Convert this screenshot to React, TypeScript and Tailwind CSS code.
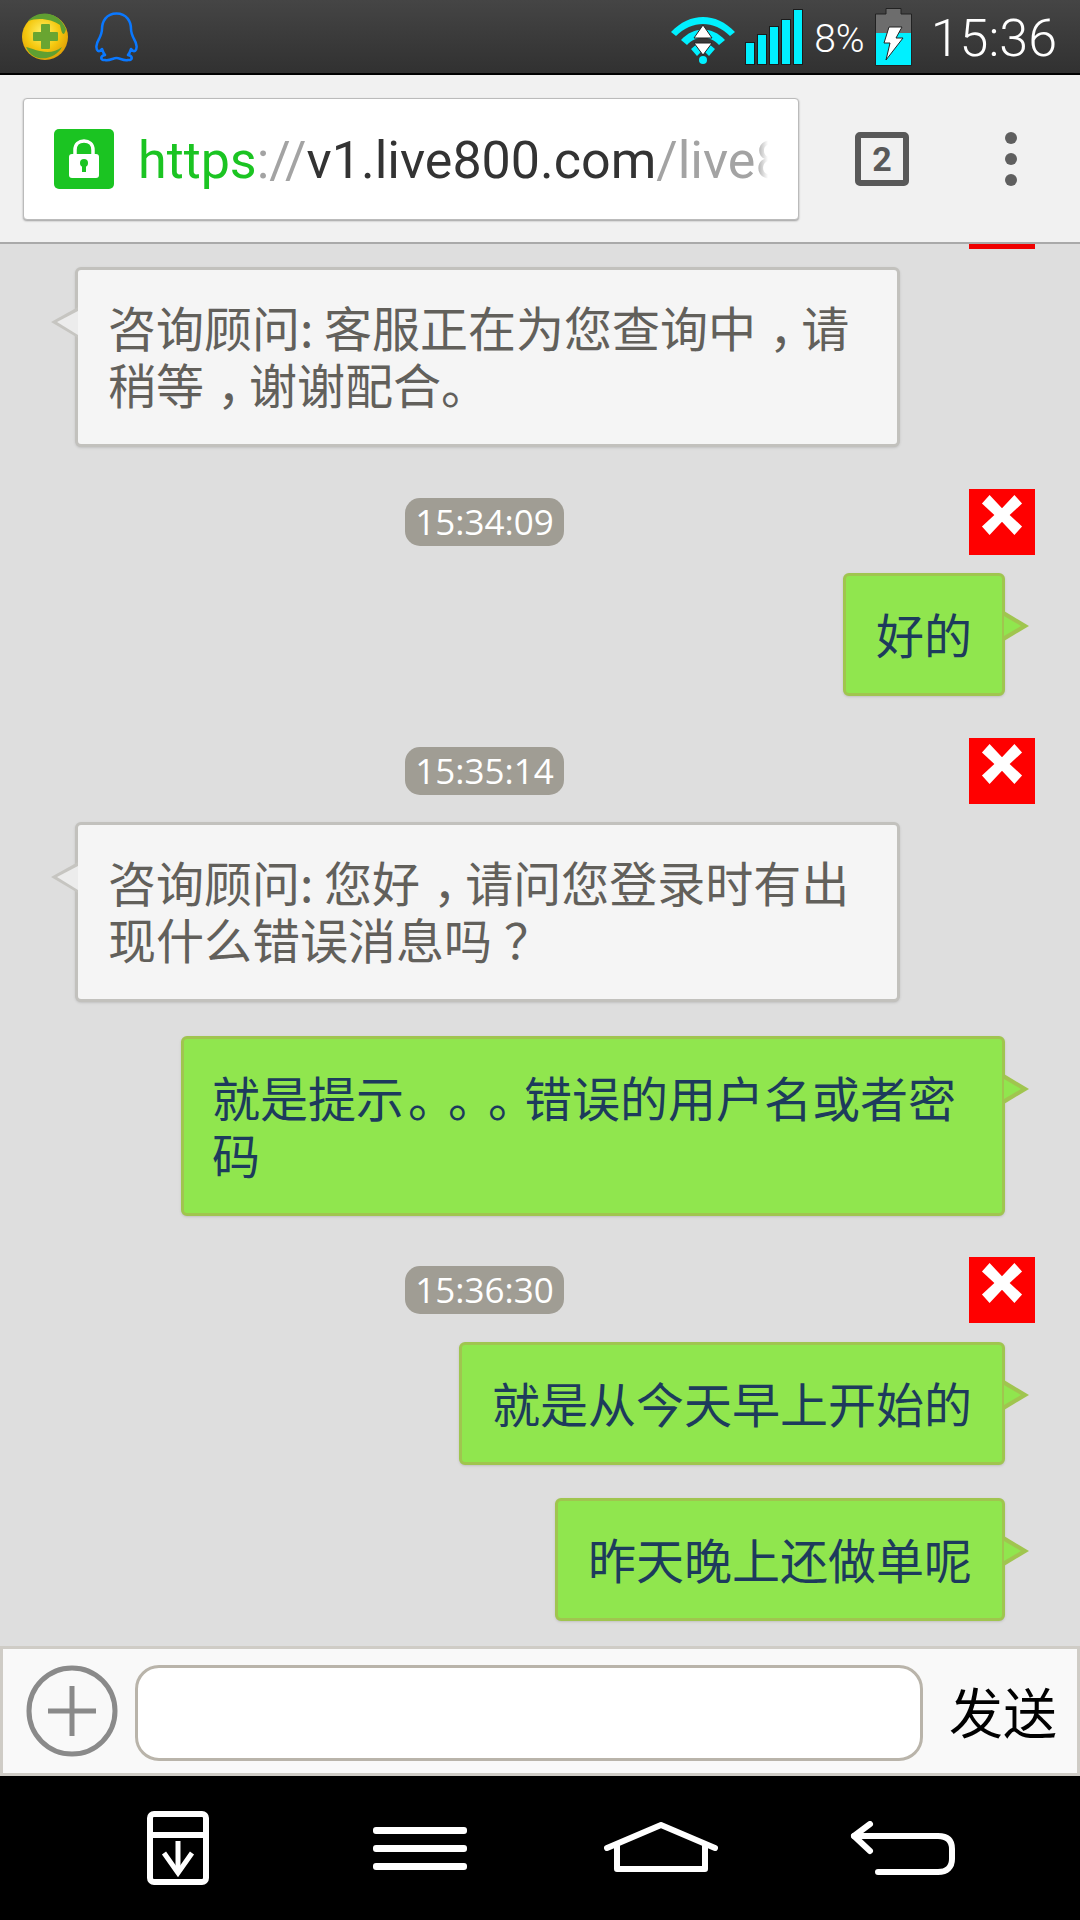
import React from "react";

const cjk = "font-['Noto_Sans_CJK_SC','Noto_Sans',sans-serif] [text-spacing-trim:space-all]";

function Close() {
  return (
    <div className="w-[66px] h-[66px] bg-[#ff0000] flex items-center justify-center shrink-0">
      <svg className="mb-[14px]" width="42" height="42" viewBox="0 0 44 44">
        <path d="M9 1 L22 15 L35 1 L43 10 L30 22 L43 34 L35 43 L22 29 L9 43 L1 34 L14 22 L1 10 Z" fill="#fff" />
      </svg>
    </div>
  );
}

function TimeRow({ t }: { t: string }) {
  return (
    <div className="flex items-center h-[66px] pl-[405px] pr-[45px]">
      <div className="w-[159px] h-[48px] rounded-[15px] bg-[#a09d94] text-white text-[35px] leading-[48px] text-center font-['Open_Sans',sans-serif]">{t}</div>
      <div className="ml-auto"><Close /></div>
    </div>
  );
}

function Comma() {
  return <span className="relative left-[13px] mr-[-3px]">，</span>;
}

function Left({ children }: { children: React.ReactNode }) {
  return (
    <div className="relative ml-[75px] w-[825px] rounded-[6px] border-[3px] border-[#c2c1bd] bg-[#f5f5f5] pl-[30px] pr-[20px] pt-[28px] pb-[32px] text-[#62605b] shadow-sm">
      <svg className="absolute top-[37px] left-[-28px]" width="28" height="32" viewBox="0 0 28 32">
        <path d="M28 0 L1 15 L28 31 Z" fill="#c6c5c1" />
        <path d="M28 4 L7 15 L28 28 Z" fill="#ececec" />
      </svg>
      <div className={`text-[48px] leading-[57px] whitespace-nowrap ${cjk}`}>{children}</div>
    </div>
  );
}

function Right({ children, wide }: { children: React.ReactNode; wide?: boolean }) {
  return (
    <div className={`relative self-end mr-[75px] rounded-[6px] border-[3px] border-[#a0c54f] bg-[#90e64e] pr-[30px] pt-[29px] pb-[31px] text-[#1d3b5c] shadow-sm ${wide ? "w-[824px] pl-[28px]" : "pl-[30px]"}`}>
      <svg className="absolute left-[100%] top-[34px] ml-[2px]" width="26" height="32" viewBox="0 0 26 32">
        <path d="M0 1 L25 16 L0 31 Z" fill="#a0c54f" />
        <path d="M0 6 L17 16 L0 26 Z" fill="#90e64e" />
      </svg>
      <div className={`text-[48px] leading-[57px] whitespace-nowrap ${cjk}`}>{children}</div>
    </div>
  );
}

export default function App() {
  return (
    <div className="w-[1080px] h-[1920px] flex flex-col bg-[#dedede] overflow-hidden">
      {/* status bar */}
      <div className="h-[75px] shrink-0 flex items-center pl-[22px] pr-[23px] border-b-[2px] border-black bg-gradient-to-b from-[#454545] to-[#313131]">
        <svg width="46" height="48" viewBox="0 0 46 48">
          <defs>
            <radialGradient id="y" cx="45%" cy="40%" r="60%">
              <stop offset="0" stopColor="#fff36a" />
              <stop offset="0.6" stopColor="#f5c80f" />
              <stop offset="1" stopColor="#e0a207" />
            </radialGradient>
          </defs>
          <circle cx="23" cy="24" r="23" fill="url(#y)" />
          <path d="M6 8 C16 -3 36 -3 44 16 C42 24 40 22 38 12 C30 6 16 4 6 8Z" fill="#5f9f32" />
          <path d="M4 34 C12 36 28 44 40 34 C34 46 12 52 4 34Z" fill="#5f9f32" />
          <path d="M20 12 h7 v8 h8 v7 h-8 v8 h-7 v-8 h-8 v-7 h8z" fill="#69a531" stroke="#69a531" strokeWidth="2" strokeLinejoin="round" />
        </svg>
        <svg className="ml-[27px]" width="43" height="50" viewBox="0 0 43 50" fill="none" stroke="#0a78ff" strokeWidth="2.5" strokeLinejoin="round">
          <path d="M21.5 1.5 C11 1.5 7 10 7 17 C7 21 6 23 4 27 C1 32 0.5 37 3 39 C5 40 6 38 7 37 C8 40 9 42 10 43 C5 44 5 48 10 48 C15 49 18 46 21.5 46 C25 46 28 49 33 48 C38 48 38 44 33 43 C34 42 35 40 36 37 C37 38 38 40 40 39 C42.5 37 42 32 39 27 C37 23 36 21 36 17 C36 10 32 1.5 21.5 1.5 Z" />
        </svg>
        <svg className="ml-auto mt-[6px]" width="66" height="48" viewBox="0 0 66 48">
          <path d="M1 16 C20 -4 46 -4 65 16 L60 20 C44 4 22 4 6 20Z" fill="#00f0ff" />
          <path d="M11 24 C24 10 42 10 55 24 L49 29 C40 19 26 19 17 29Z" fill="#00f0ff" />
          <path d="M21 33 L27 28 L31 36 L27 40Z M45 33 L39 28 L35 36 L39 40Z" fill="#00f0ff" />
          <circle cx="33" cy="44" r="4" fill="#00f0ff" />
          <path d="M33 9 L42 22 H24Z M24 27 H42 L33 39Z" fill="#fff" stroke="#222" strokeWidth="1" />
        </svg>
        <div className="ml-[9px] h-[57px] flex items-end gap-[2px]">
          {[23, 31, 39, 46, 56].map((h) => (
            <div key={h} className="w-[10px] bg-[#00f0ff] border border-[#1b1b1b]" style={{ height: h }} />
          ))}
        </div>
        <div className="ml-[11px] mt-[5px] text-white text-[39px] leading-none font-['Roboto',sans-serif] font-light">8%</div>
        <svg className="ml-[10px]" width="37" height="58" viewBox="0 0 37 58">
          <path d="M11 .5 H26 V6 H36.5 V57.5 H.5 V6 H11Z" fill="#6d6d6d" stroke="#222" />
          <rect x="1" y="25" width="35" height="32" fill="#00f0ff" />
          <path d="M14 19 H27 L21 30 H28 L11 52 L15 35 H9Z" fill="#fff" stroke="#222" strokeWidth="1" />
        </svg>
        <div className="ml-[19px] mt-[4px] text-white text-[52px] leading-none font-['Roboto',sans-serif] font-light">15:36</div>
      </div>

      {/* browser bar */}
      <div className="h-[169px] shrink-0 flex items-start pl-[23px] pt-[23px] bg-[#f1f1f1] border-b-[2px] border-[#a9a9a9]">
        <div className="w-[776px] h-[122px] bg-white rounded-[4px] border border-[#bbb] shadow-[0_1px_2px_rgba(0,0,0,0.35)] flex items-center pl-[30px] pr-[30px] overflow-hidden">
          <div className="w-[60px] h-[60px] rounded-[5px] bg-[#1bc422] flex items-center justify-center shrink-0">
            <svg width="32" height="40" viewBox="0 0 32 40">
              <path d="M7 16 V11 C7 5 11 2 16 2 C21 2 25 5 25 11 V16" fill="none" stroke="#fff" strokeWidth="3.5" />
              <rect x="1" y="15" width="30" height="24" rx="3" fill="#fff" />
              <circle cx="16" cy="24" r="4" fill="#1bc422" />
              <rect x="14" y="25" width="4" height="8" fill="#1bc422" />
            </svg>
          </div>
          <div className="relative ml-[24px] mt-[4px] w-[630px] overflow-hidden whitespace-nowrap text-[52px] leading-[64px] font-['Roboto',sans-serif] font-normal text-[#333]">
            <span className="text-[#1bc422]">https</span><span className="text-[#a3a3a3]">://</span>v1.live800.com<span className="text-[#a3a3a3]">/live800/chat</span>
            <div className="absolute right-0 top-0 h-full w-[12px] bg-gradient-to-r from-transparent to-white" />
          </div>
        </div>
        <div className="ml-[56px] mt-[34px] w-[54px] h-[54px] rounded-[5px] border-[6px] border-[#595959] flex items-center justify-center text-[#595959] text-[34px] leading-none font-bold font-['Roboto',sans-serif]">2</div>
        <div className="ml-[96px] mt-[34px] h-[54px] flex flex-col justify-between">
          <div className="w-[12px] h-[12px] rounded-full bg-[#5f5f5f]" />
          <div className="w-[12px] h-[12px] rounded-full bg-[#5f5f5f]" />
          <div className="w-[12px] h-[12px] rounded-full bg-[#5f5f5f]" />
        </div>
      </div>

      {/* chat */}
      <div className="flex-1 min-h-0 flex flex-col overflow-hidden">
        <div className="ml-[969px] w-[66px] h-[5px] bg-[#ef0000] shrink-0" />
        <div className="mt-[18px] flex flex-col">
          <Left>咨询顾问: 客服正在为您查询中<Comma />请<br />稍等<Comma />谢谢配合。</Left>
          <div className="mt-[42px]"><TimeRow t="15:34:09" /></div>
          <div className="mt-[18px] flex flex-col"><Right>好的</Right></div>
          <div className="mt-[42px]"><TimeRow t="15:35:14" /></div>
          <div className="mt-[18px]"><Left>咨询顾问: 您好<Comma />请问您登录时有出<br />现什么错误消息吗<span className="relative left-[12px]">？</span></Left></div>
          <div className="mt-[34px] flex flex-col">
            <Right wide>就是提示<span className="tracking-[-8px] relative left-[4px]">。。。</span>错误的用户名或者密<br />码</Right>
          </div>
          <div className="mt-[41px]"><TimeRow t="15:36:30" /></div>
          <div className="mt-[19px] flex flex-col"><Right>就是从今天早上开始的</Right></div>
          <div className="mt-[33px] flex flex-col"><Right>昨天晚上还做单呢</Right></div>
        </div>
      </div>

      {/* input */}
      <div className="h-[130px] shrink-0 flex items-center bg-[#f9f9f9] border-[3px] border-[#cfccc6] pl-[23px]">
        <svg width="92" height="92" viewBox="0 0 92 92" className="shrink-0">
          <circle cx="46" cy="46" r="43" fill="none" stroke="#8a8a8a" strokeWidth="5" />
          <path d="M46 21 V71 M22 46 H70" stroke="#8a8a8a" strokeWidth="5" fill="none" />
        </svg>
        <div className="ml-[17px] mt-[4px] w-[788px] h-[96px] rounded-[24px] border-[3px] border-[#b9b4aa] bg-white" />
        <div className={`ml-[26px] text-black text-[54px] leading-none ${cjk}`}>发送</div>
      </div>

      {/* nav bar */}
      <div className="h-[144px] shrink-0 bg-black relative flex items-center">
        <svg className="ml-[147px]" width="62" height="74" viewBox="0 0 62 74" fill="none" stroke="#fff" strokeWidth="6">
          <rect x="3" y="3" width="56" height="68" rx="4" />
          <path d="M3 24 H59" />
          <path d="M31 30 V58" strokeWidth="5" />
          <path d="M17 42 L31 62 L45 42" strokeWidth="5" />
        </svg>
        <div className="ml-[164px] w-[94px] flex flex-col gap-[11px]">
          <div className="h-[7px] rounded-[3px] bg-white" />
          <div className="h-[7px] rounded-[3px] bg-white" />
          <div className="h-[7px] rounded-[3px] bg-white" />
        </div>
        <svg className="ml-[137px]" width="114" height="52" viewBox="0 0 114 52" fill="none" stroke="#fff" strokeWidth="6" strokeLinecap="round" strokeLinejoin="round">
          <path d="M3 26 L57 3 L111 26" />
          <path d="M13 24 V47 H101 V24" />
        </svg>
        <svg className="ml-[132px]" width="105" height="54" viewBox="0 0 105 54" fill="none" stroke="#fff" strokeWidth="6" strokeLinecap="round" strokeLinejoin="round">
          <path d="M4 15 H88 C97 15 102 19 102 28 V38 C102 46 97 51 88 51 H28" />
          <path d="M20 3 L4 15 L20 30" />
        </svg>
      </div>
    </div>
  );
}
